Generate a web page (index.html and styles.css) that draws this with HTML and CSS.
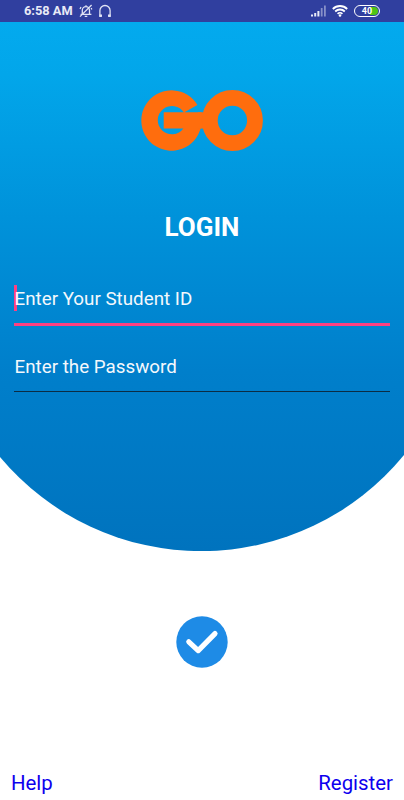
FILE: index.html
```html
<!DOCTYPE html>
<html lang="en">
<head>
    <meta charset="UTF-8">
    <meta name="viewport" content="width=device-width, initial-scale=1.0">
    <title>Login</title>
    <link rel="stylesheet" href="styles.css">
</head>
<body>

    <div class="status-bar">
        <span class="time">6:58 AM</span>
        <svg class="icon-mute" width="14" height="14" viewBox="0 0 14 14">
            <path d="M3.3 9.8V6.2a3.6 3.6 0 0 1 7.2 0v3.6M1.6 10.4h10.8M5.7 12.4h2.6M1 12.6L12.6 1M7 1.2v1.2M1 5l1-2M12.8 5.5l-.6-1.6" />
        </svg>
        <svg class="icon-headset" width="14" height="14" viewBox="0 0 14 14">
            <path d="M3.8 12.3H1.9V6.6a5.1 5.1 0 0 1 10.2 0v5.7h-1.9" />
            <path class="thick" d="M1.4 11.6h2.6M10 11.6h2.6" />
        </svg>
        <div class="status-right">
            <svg class="icon-signal" width="16" height="12" viewBox="0 0 16 12">
                <path d="M0 9.5h2V11.5H0zM3.2 8h2v3.5h-2zM6.4 6h2v5.5h-2z" />
                <path class="dim" d="M9.8 3h1.8v8.5H9.8zM13 .5h1.8v11H13z" />
            </svg>
            <svg class="icon-wifi" width="16" height="12" viewBox="0 0 16 12">
                <path d="M.8 4a10.2 10.2 0 0 1 14.4 0M3.2 6.5a6.8 6.8 0 0 1 9.6 0M5.6 8.8a3.4 3.4 0 0 1 4.8 0" />
                <circle cx="8" cy="10.5" r="1.3" />
            </svg>
            <div class="battery">40</div>
        </div>
    </div>

    <div class="login">
        <svg class="logo" width="124" height="61" viewBox="0 0 124 61">
            <path d="M57.4 15A30.2 30.2 0 1 0 61.7 31V22.3H23.7V38.6H43.4A14.2 14.2 0 1 1 44 22.6Z" />
            <path d="M58 22.3h9v16.3h-9z" />
            <circle cx="92.4" cy="30.5" r="22.6" />
        </svg>

        <h1>LOGIN</h1>

        <div class="field active">
            <span class="cursor"></span>
            <span>Enter Your Student ID</span>
        </div>
        <div class="field">
            <span>Enter the Password</span>
        </div>
    </div>

    <div class="submit">
        <svg width="52" height="52" viewBox="0 0 52 52">
            <circle cx="26" cy="26" r="25.7" />
            <path d="M12.8 25.8L22.2 34.6L39 17.6" />
        </svg>
    </div>

    <div class="footer">
        <a>Help</a>
        <a>Register</a>
    </div>

</body>
</html>
```

FILE: styles.css
```css
body {
    font-family: Roboto, sans-serif;
    background-color: #fff;
    margin: 0;
    height: 800px;
    display: flex;
    flex-direction: column;
}

.status-bar {
    height: 22px;
    background-color: #303f9f;
    color: #e8eaf6;
    display: flex;
    align-items: center;
    padding: 0 24px;
    box-sizing: border-box;
}

.time {
    font-size: 12.8px;
    font-weight: 700;
    white-space: nowrap;
    width: 49px;
    margin-right: 6px;
    padding-bottom: 1px;
}

.icon-mute,
.icon-headset {
    fill: none;
    stroke: #e0e3f4;
    stroke-width: 1.3;
}

.icon-headset {
    margin-left: 5px;
}

.icon-headset .thick {
    stroke-width: 2;
}

.status-right {
    margin-left: auto;
    display: flex;
    align-items: center;
}

.icon-signal {
    fill: #e8eaf6;
}

.icon-signal .dim {
    fill: #8790c8;
}

.icon-wifi {
    fill: none;
    stroke: #fff;
    stroke-width: 1.8;
    margin: 0 6px 0 5px;
}

.icon-wifi circle {
    fill: #fff;
    stroke: none;
}

.battery {
    width: 26px;
    height: 12px;
    box-sizing: border-box;
    border: 1px solid #fff;
    border-radius: 6px;
    background: linear-gradient(to right, transparent 14px, #4fc414 14px) content-box;
    padding: 1px;
    color: #fff;
    font-size: 9px;
    font-weight: 700;
    line-height: 8px;
    text-align: center;
}

.login {
    position: relative;
    height: 529px;
    padding: 68px 14px 0;
    box-sizing: border-box;
    display: flex;
    flex-direction: column;
}

/* blue backdrop with a round bottom edge */
.login::before {
    content: "";
    position: absolute;
    z-index: -1;
    inset: 0;
    clip-path: path("M0 0H404V433A262 262 0 0 1 0 435Z");
    background: linear-gradient(#03aaee, #02a6ea 10%, #0092da 37%, #007fcb 66%, #0073be);
}

.logo {
    align-self: center;
    fill: #ff6d0d;
}

.logo circle {
    fill: none;
    stroke: #ff6d0d;
    stroke-width: 15.8;
}

h1 {
    margin: 60px 0 0;
    color: #fff;
    font-size: 26px;
    line-height: 32px;
    text-align: center;
}

.field {
    position: relative;
    height: 66px;
    box-sizing: border-box;
    padding: 0 0 12px 0.5px;
    border-bottom: 1px solid #0b2c44;
    color: #f4f8fc;
    font-size: 18.8px;
    line-height: 24px;
    display: flex;
    align-items: flex-end;
}

.field.active {
    height: 83px;
    border-bottom: 3px solid #ff4081;
}

.cursor {
    position: absolute;
    left: 0;
    bottom: 12px;
    z-index: -1;
    width: 3px;
    height: 26px;
    background-color: #ff4081;
}

.submit {
    margin-top: 65px;
    text-align: center;
}

.submit circle {
    fill: #1e8be6;
}

.submit path {
    fill: none;
    stroke: #fff;
    stroke-width: 5.2;
    stroke-linecap: round;
    stroke-linejoin: round;
}

.footer {
    margin-top: auto;
    padding: 0 11px 4px;
    display: flex;
    justify-content: space-between;
    color: #0d00ee;
    font-size: 20.4px;
    line-height: 25px;
}
```
